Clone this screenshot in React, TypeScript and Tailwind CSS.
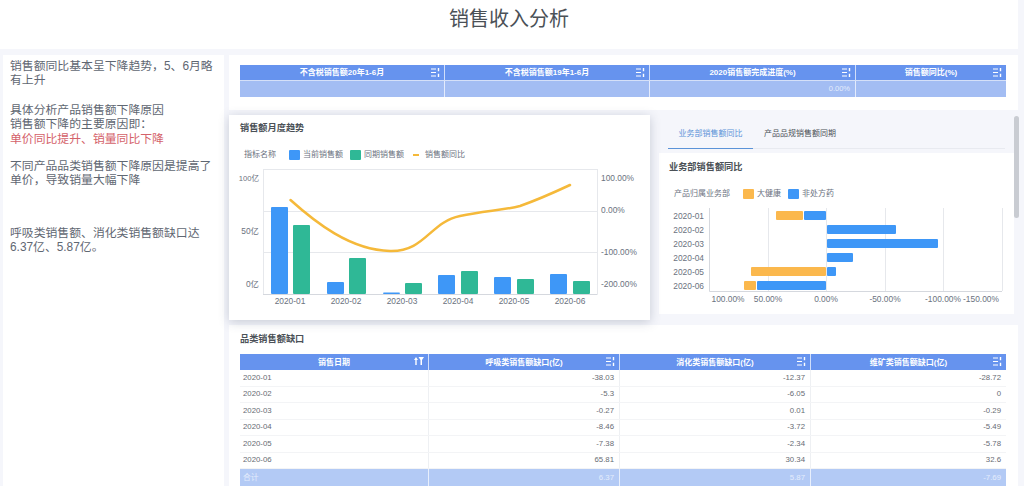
const font = "font-['Liberation_Sans','Noto_Sans_CJK_SC',sans-serif]";

function SortIcon({ filter = false }: { filter?: boolean }) {
  if (filter) {
    return (
      <svg width="10" height="8" viewBox="0 0 10 8" className="shrink-0" fill="#fff">
        <path d="M2 0 L4 3 H2.7 V8 H1.3 V3 H0 Z" />
        <path d="M4.5 0 H10 L8 3 V8 H6.5 V3 Z" />
      </svg>
    );
  }
  return (
    <svg width="9" height="9" viewBox="0 0 9 9" className="shrink-0" fill="none" stroke="#fff" strokeWidth="1">
      <path d="M0 1 H5 M0 4.5 H5 M0 8 H5" />
      <path d="M7.5 0 V3.2 M7.5 5.8 V9" strokeWidth="1.4" />
    </svg>
  );
}

function HeadCell({ label, filter }: { label: string; filter?: boolean }) {
  return (
    <div className="relative flex items-center justify-center border-r border-white/70 pt-px text-[8px] font-bold text-white last:border-r-0 h-full">
      <span>{label}</span>
      <span className="absolute right-[4px] top-[3px]">
        <SortIcon filter={filter} />
      </span>
    </div>
  );
}

function SummaryTable() {
  const cols = "grid grid-cols-[205px_205px_206px_150px]";
  return (
    <div className="w-[766px]">
      <div className={`${cols} h-[16px] bg-[#6693ee] border-b border-[#d5e0f8]`}>
        <HeadCell label="不含税销售额20年1-6月" />
        <HeadCell label="不含税销售额19年1-6月" />
        <HeadCell label="2020销售额完成进度(%)" />
        <HeadCell label="销售额同比(%)" />
      </div>
      <div className={`${cols} h-[16px] bg-[#a3bdf3] text-[7.5px] text-[#e4ecfc]`}>
        <div className="border-r border-white/70" />
        <div className="border-r border-white/70" />
        <div className="border-r border-white/70 flex items-center justify-end pr-[5px]">0.00%</div>
        <div />
      </div>
    </div>
  );
}

function Legend({ label, items }: { label: string; items: { name: string; color: string; line?: boolean }[] }) {
  return (
    <div className="flex items-center h-[12px] text-[8px] text-[#6b7280]">
      <span className="mr-[13px]">{label}</span>
      {items.map((it) => (
        <span key={it.name} className="flex items-center mr-[7px]">
          {it.line ? (
            <span className="w-[6px] h-[1.5px] ml-[2px] mr-[6px] bg-[#f5b93a]" />
          ) : (
            <span className="w-[11px] h-[10px] rounded-[1px] mr-[3px]" style={{ background: it.color }} />
          )}
          {it.name}
        </span>
      ))}
    </div>
  );
}

const vbars = [
  { x: 271, top: 207, c: "#3e97f7" }, { x: 293, top: 225, c: "#2fb896" },
  { x: 327, top: 282, c: "#3e97f7" }, { x: 349, top: 258, c: "#2fb896" },
  { x: 383, top: 292.5, c: "#3e97f7" }, { x: 405, top: 283, c: "#2fb896" },
  { x: 438, top: 275, c: "#3e97f7" }, { x: 461, top: 271, c: "#2fb896" },
  { x: 494, top: 277, c: "#3e97f7" }, { x: 517, top: 279, c: "#2fb896" },
  { x: 550, top: 274, c: "#3e97f7" }, { x: 573, top: 281, c: "#2fb896" },
];

// viewBox keeps screenshot coordinates so numbers can be read straight off the picture
function TrendChart() {
  return (
    <svg width="402" height="150" viewBox="238 165 402 150" className="block mt-[4px] -ml-[2px]" fontFamily="'Liberation Sans','Noto Sans CJK SC',sans-serif">
      <g stroke="#e6e8ec" strokeWidth="1" fill="none">
        <path d="M263 169.5 H597.5 M263 211.5 H597.5 M263 252.5 H597.5" />
        <path d="M263.5 169 V294 M597.5 169 V294" />
      </g>
      <path d="M263 294.5 H597.5" stroke="#d5d8de" />
      {vbars.map((b) => (
        <rect key={b.x} x={b.x} y={b.top} width="17" height={294 - b.top} fill={b.c} rx="1" />
      ))}
      <path d="M290.5 200 C 315 222 350 250 390 251 C 425 252 430 222 460 216 C 485 211 505 210 520 206 C 540 199 555 192 570 185" fill="none" stroke="#f5b93a" strokeWidth="2.5" strokeLinecap="round" />
      <g fontSize="8.4" fill="#6b7280" textAnchor="end">
        <text x="259" y="181" fontSize="7.6">100亿</text>
        <text x="259" y="234">50亿</text>
        <text x="259" y="287">0亿</text>
      </g>
      <g fontSize="8.4" fill="#6b7280">
        <text x="601" y="181">100.00%</text>
        <text x="601" y="213">0.00%</text>
        <text x="601" y="255">-100.00%</text>
        <text x="601" y="287">-200.00%</text>
      </g>
      <g fontSize="8.4" fill="#6b7280" textAnchor="middle">
        {["2020-01", "2020-02", "2020-03", "2020-04", "2020-05", "2020-06"].map((m, i) => (
          <text key={m} x={290 + i * 56} y="304">{m}</text>
        ))}
      </g>
    </svg>
  );
}

const hbars = [
  { y: 211, o: [776, 803], b: [804, 826] },
  { y: 225, b: [827, 896] },
  { y: 239, b: [827, 938] },
  { y: 253, b: [827, 853] },
  { y: 267, o: [751, 826], b: [827, 836] },
  { y: 281, o: [744, 756], b: [757, 826] },
];

function DeptChart() {
  return (
    <svg width="350" height="106" viewBox="664 204 350 106" className="block" fontFamily="'Liberation Sans','Noto Sans CJK SC',sans-serif">
      <g stroke="#e6e8ec" fill="none">
        <path d="M768.5 208 V291 M885.5 208 V291 M943.5 208 V291 M1002.5 208 V291" />
      </g>
      <path d="M709.5 208 V291.5 H1002" stroke="#d5d8de" fill="none" />
      <path d="M826.5 208 V291" stroke="#e6e8ec" />
      {hbars.map((r, i) => (
        <g key={r.y}>
          {r.o && <rect x={r.o[0]} y={r.y} width={r.o[1] - r.o[0]} height="9" fill="#fbb84d" rx="1" />}
          <rect x={r.b[0]} y={r.y} width={r.b[1] - r.b[0]} height="9" fill="#3e97f7" rx="1" />
          <text x="704" y={r.y + 7.5} fontSize="8.4" fill="#6b7280" textAnchor="end">{`2020-0${i + 1}`}</text>
        </g>
      ))}
      <g fontSize="8.4" fill="#6b7280" textAnchor="middle">
        <text x="728" y="302">100.00%</text>
        <text x="768" y="302">50.00%</text>
        <text x="826" y="302">0.00%</text>
        <text x="885" y="302">-50.00%</text>
        <text x="943" y="302">-100.00%</text>
        <text x="981" y="302">-150.00%</text>
      </g>
    </svg>
  );
}

const rows = [
  ["2020-01", "-38.03", "-12.37", "-28.72"],
  ["2020-02", "-5.3", "-6.05", "0"],
  ["2020-03", "-0.27", "0.01", "-0.29"],
  ["2020-04", "-8.46", "-3.72", "-5.49"],
  ["2020-05", "-7.38", "-2.34", "-5.78"],
  ["2020-06", "65.81", "30.34", "32.6"],
];

function GapTable() {
  const cols = "grid grid-cols-[189px_191px_191px_195px]";
  return (
    <div className="w-[766px] text-[7.8px]">
      <div className={`${cols} h-[16px] bg-[#6693ee]`}>
        <HeadCell label="销售日期" filter />
        <HeadCell label="呼吸类销售额缺口(亿)" />
        <HeadCell label="消化类销售额缺口(亿)" />
        <HeadCell label="维矿类销售额缺口(亿)" />
      </div>
      {rows.map((r) => (
        <div key={r[0]} className={`${cols} h-[16.5px] border-b border-[#f3f4f6] text-[#686c74]`}>
          {r.map((v, i) => (
            <div key={i} className={`flex items-center border-r border-[#eef0f3] last:border-r-0 ${i === 0 ? "pl-[3px]" : "justify-end pr-[5px]"}`}>
              {v}
            </div>
          ))}
        </div>
      ))}
      <div className={`${cols} h-[17px] bg-[#b3caf5] text-[#e4ecfc]`}>
        {["合计", "6.37", "5.87", "-7.69"].map((v, i) => (
          <div key={v} className={`flex items-center border-r border-white/70 last:border-r-0 ${i === 0 ? "pl-[3px]" : "justify-end pr-[5px]"}`}>
            {v}
          </div>
        ))}
      </div>
    </div>
  );
}

export default function App() {
  return (
    <div className={`${font} relative w-[1024px] h-[486px] overflow-hidden bg-[#f5f6fb] flex flex-col`}>
      <div className="w-[1018px] h-[49px] shrink-0 bg-white flex items-center justify-center pb-[12px] text-[20px] text-[#4b5157]">
        销售收入分析
      </div>

      <div className="flex pt-[6px] pl-[3px] flex-1 min-h-0">
        <div className="w-[221px] shrink-0 bg-white pl-[7px] pt-[4px] text-[11.85px] leading-[14.4px] text-[#5f6772]">
          <p>
            销售额同比基本呈下降趋势，5、6月略
            <br />
            有上升
          </p>
          <p className="mt-[15px]">具体分析产品销售额下降原因</p>
          <p>销售额下降的主要原因即：</p>
          <p className="text-[#d4626a]">单价同比提升、销量同比下降</p>
          <p className="mt-[13px]">
            不同产品品类销售额下降原因是提高了
            <br />
            单价，导致销量大幅下降
          </p>
          <p className="mt-[38px]">
            呼吸类销售额、消化类销售额缺口达
            <br />
            6.37亿、5.87亿。
          </p>
        </div>

        <div className="ml-[5px] w-[789px] shrink-0 flex flex-col">
          <div className="h-[55px] shrink-0 bg-white px-[11px] pt-[10px]">
            <SummaryTable />
          </div>

          <div className="flex h-[205px] mt-[5px] shrink-0">
            <div className="relative z-10 w-[421px] h-[205px] bg-white shadow-[0_2px_10px_rgba(60,70,100,0.25)] pl-[11px] pt-[7px]">
              <div className="text-[9.2px] font-bold leading-[12px] text-[#4b5157]">销售额月度趋势</div>
              <div className="mt-[15px] pl-[4px]">
                <Legend
                  label="指标名称"
                  items={[
                    { name: "当前销售额", color: "#3e97f7" },
                    { name: "同期销售额", color: "#2fb896" },
                    { name: "销售额同比", color: "#f5b93a", line: true },
                  ]}
                />
              </div>
              <TrendChart />
            </div>

            <div className="ml-[9px] w-[355px] flex flex-col">
              <div className="h-[33px] mx-[9px] mt-[1px] pt-[4px] shrink-0 flex border-b border-[#e8eaf0] text-[8px]">
                <span className="w-[85px] flex items-center justify-center text-[#5b93d8] border-b border-[#5b93d8] -mb-px">业务部销售额同比</span>
                <span className="ml-[11px] flex items-center text-[#4b5157]">产品品规销售额同期</span>
              </div>
              <div className="mt-[4px] h-[161px] bg-white pt-[8px]">
                <div className="pl-[10px] text-[9.2px] font-bold leading-[12px] text-[#4b5157]">业务部销售额同比</div>
                <div className="mt-[15px] pl-[15px]">
                  <Legend
                    label="产品归属业务部"
                    items={[
                      { name: "大健康", color: "#fbb84d" },
                      { name: "非处方药", color: "#3e97f7" },
                    ]}
                  />
                </div>
                <div className="mt-[4px] pl-[5px]">
                  <DeptChart />
                </div>
              </div>
            </div>
          </div>

          <div className="mt-[5px] h-[161px] shrink-0 bg-white px-[11px] pt-[8px]">
            <div className="text-[9.2px] font-bold leading-[12px] text-[#4b5157]">品类销售额缺口</div>
            <div className="mt-[8px] pt-px">
              <GapTable />
            </div>
          </div>
        </div>

        <div className="absolute right-[5px] top-[116px] w-[5px] h-[102px] rounded-[3px] bg-[#c9ccd2]" />
      </div>
    </div>
  );
}
